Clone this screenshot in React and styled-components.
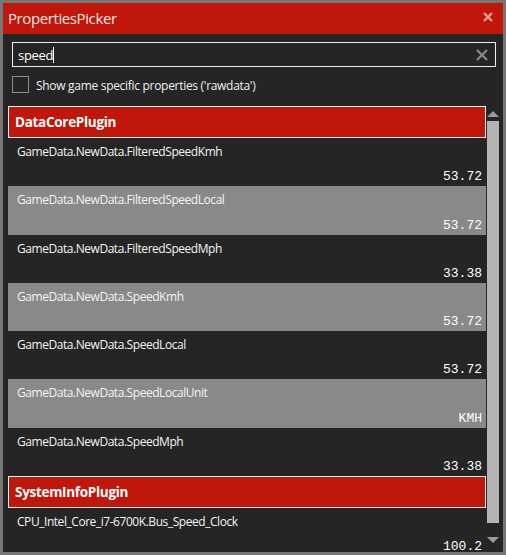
import styled, { createGlobalStyle } from "styled-components";

const GlobalStyle = createGlobalStyle`
  html, body {
    margin: 0;
    padding: 0;
    background: #767676;
  }
  * { box-sizing: border-box; }
`;

const groups = [
  {
    name: "DataCorePlugin",
    items: [
      ["GameData.NewData.FilteredSpeedKmh", "53.72"],
      ["GameData.NewData.FilteredSpeedLocal", "53.72"],
      ["GameData.NewData.FilteredSpeedMph", "33.38"],
      ["GameData.NewData.SpeedKmh", "53.72"],
      ["GameData.NewData.SpeedLocal", "53.72"],
      ["GameData.NewData.SpeedLocalUnit", "KMH"],
      ["GameData.NewData.SpeedMph", "33.38"],
    ],
  },
  {
    name: "SystemInfoPlugin",
    items: [["CPU_Intel_Core_i7-6700K.Bus_Speed_Clock", "100.2"]],
  },
];

export default function App() {
  return (
    <Window>
      <GlobalStyle />
      <TitleBar>
        <Title>PropertiesPicker</Title>
        <CloseBtn>
          <svg width="10" height="10" viewBox="0 0 10 10">
            <path d="M1 1L9 9M9 1L1 9" stroke="#f2a3a0" strokeWidth="2.2" />
          </svg>
        </CloseBtn>
      </TitleBar>
      <Body>
        <Search>
          <SearchText>
            speed<Caret />
          </SearchText>
          <svg width="12" height="12" viewBox="0 0 12 12">
            <path d="M1 1L11 11M11 1L1 11" stroke="#8a8a8a" strokeWidth="2.2" />
          </svg>
        </Search>
        <CheckRow>
          <CheckBox />
          <CheckLabel>Show game specific properties ('rawdata')</CheckLabel>
        </CheckRow>
        <ListArea>
          <List>
            {groups.map((g) => (
              <div key={g.name}>
                <GroupHeader>{g.name}</GroupHeader>
                {g.items.map(([name, value], i) => (
                  <Row key={name} $alt={i % 2 === 1}>
                    <PropName>{name}</PropName>
                    <PropValue>{value}</PropValue>
                  </Row>
                ))}
              </div>
            ))}
          </List>
          <ScrollBar>
            <Arrow $up />
            <Thumb />
            <Arrow />
          </ScrollBar>
        </ListArea>
      </Body>
    </Window>
  );
}

const Window = styled.div`
  width: 506px;
  height: 555px;
  border: 3px solid #767676;
  display: flex;
  flex-direction: column;
  background: #252525;
  font-family: "Open Sans", "Noto Sans", sans-serif;
  overflow: hidden;
`;

const TitleBar = styled.div`
  height: 31px;
  flex: none;
  background: #c0170a;
  display: flex;
  align-items: center;
  justify-content: space-between;
  padding: 0 10px 0 5px;
`;

const Title = styled.div`
  color: #fbe9e8;
  font-size: 15px;
  letter-spacing: -0.4px;
  margin-top: -2px;
`;

const CloseBtn = styled.div`
  display: flex;
  margin-top: -4px;
`;

const Body = styled.div`
  flex: 1;
  display: flex;
  flex-direction: column;
  min-height: 0;
`;

const Search = styled.div`
  margin: 8px 7px 0 9px;
  height: 25px;
  border: 1px solid #f0f0f0;
  display: flex;
  align-items: center;
  justify-content: space-between;
  padding: 0 7px 0 5px;
  flex: none;
`;

const SearchText = styled.div`
  color: #ffffff;
  font-size: 13px;
  letter-spacing: -0.3px;
  display: flex;
  align-items: center;
`;

const Caret = styled.span`
  display: inline-block;
  width: 1px;
  height: 16px;
  background: #ffffff;
`;

const CheckRow = styled.div`
  display: flex;
  align-items: center;
  gap: 7px;
  margin: 9px 0 0 9px;
  height: 17px;
  flex: none;
`;

const CheckBox = styled.div`
  width: 17px;
  height: 17px;
  border: 1px solid #8c8c8c;
`;

const CheckLabel = styled.div`
  color: #f0f0f0;
  font-size: 12px;
  letter-spacing: -0.3px;
  margin-top: 1px;
`;

const ListArea = styled.div`
  flex: 1;
  min-height: 0;
  display: flex;
  margin-top: 13px;
  padding: 0 4px 0 5px;
  gap: 1px;
  overflow: hidden;
`;

const List = styled.div`
  flex: 1;
  overflow: hidden;
`;

const GroupHeader = styled.div`
  height: 32px;
  background: #c0170a;
  border: 1px solid #f4f4f4;
  color: #ffffff;
  font-weight: 700;
  font-size: 13.5px;
  letter-spacing: -0.3px;
  display: flex;
  align-items: center;
  padding-left: 6px;
`;

const Row = styled.div`
  height: 48.3px;
  background: ${(p) => (p.$alt ? "#898989" : "transparent")};
  display: flex;
  flex-direction: column;
  justify-content: space-between;
  padding: 5px 4px 2px 9px;
`;

const PropName = styled.div`
  color: #f4f4f4;
  font-size: 12px;
  letter-spacing: -0.45px;
`;

const PropValue = styled.div`
  align-self: flex-end;
  color: #ffffff;
  font-family: "Liberation Mono", "DejaVu Sans Mono", monospace;
  font-size: 13px;
`;

const ScrollBar = styled.div`
  width: 12px;
  flex: none;
  display: flex;
  flex-direction: column;
  align-items: center;
  padding: 5px 0 9px;
  gap: 4px;
`;

const Arrow = styled.div`
  width: 0;
  height: 0;
  border-left: 6px solid transparent;
  border-right: 6px solid transparent;
  ${(p) =>
    p.$up
      ? "border-bottom: 6px solid #9a9a9a;"
      : "border-top: 6px solid #9a9a9a; margin-top: 10px;"}
  flex: none;
`;

const Thumb = styled.div`
  width: 12px;
  flex: 1;
  background: #b4b4b4;
`;
